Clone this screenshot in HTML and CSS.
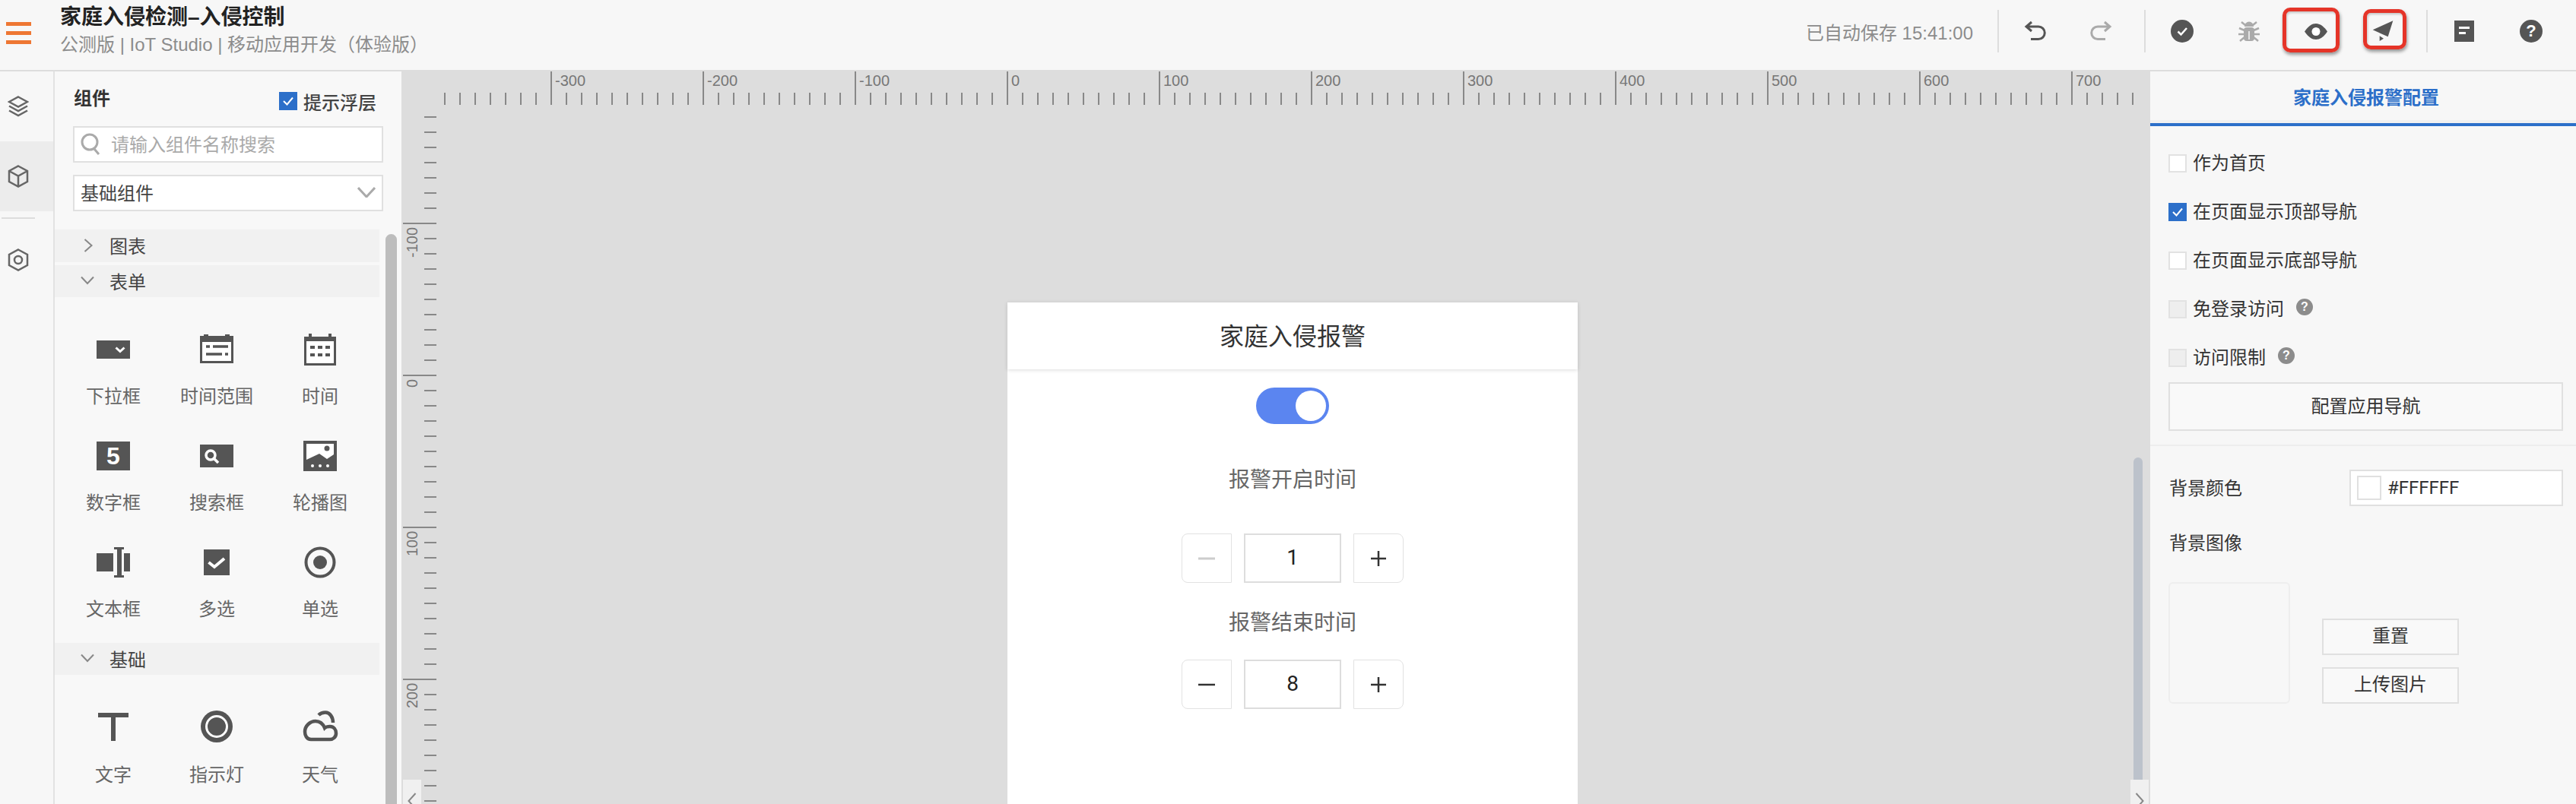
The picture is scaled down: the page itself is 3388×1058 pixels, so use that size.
FILE: index.html
```html
<!DOCTYPE html>
<html lang="zh-CN">
<head>
    <meta charset="UTF-8">
    <title>家庭入侵检测-入侵控制</title>
    <link rel="stylesheet" href="styles.css">
</head>
<body>
<div class="app">
    <header class="topbar">
        <div class="menu-btn"><span></span><span></span><span></span></div>
        <div class="title-block">
            <div class="app-title">家庭入侵检测–入侵控制</div>
            <div class="app-sub">公测版 | IoT Studio | 移动应用开发（体验版）</div>
        </div>
        <div class="saved">已自动保存 15:41:00</div>
        <i class="vline first"></i>
        <div class="tools tools-edit">
            <div class="tool"><svg width="30" height="28" viewBox="0 0 30 28" class="line-icon"><path d="M10 2 L3 8 L10 14 M3 8 H19 A8 8 0 0 1 19 24.500 H9"/></svg></div>
            <div class="tool"><svg width="30" height="28" viewBox="0 0 30 28" class="line-icon grey"><path d="M20 2 L27 8 L20 14 M27 8 H11 A8 8 0 0 0 11 24.500 H21"/></svg></div>
        </div>
        <i class="vline"></i>
        <div class="tools">
            <div class="tool">
                <svg width="30" height="30" viewBox="0 0 30 30"><circle cx="15" cy="15" r="15" fill="#555"/><path d="M9.500 15.500 L13.500 19.500 L21 11" fill="none" stroke="#fff" stroke-width="2.500"/></svg>
            </div>
            <div class="tool">
                <svg width="28" height="28" viewBox="0 0 28 28" fill="#aaa"><path d="M8 8 A6 6.500 0 0 1 20 8 Z"/><rect x="7" y="9" width="14" height="18" rx="4"/><path d="M4 2 L9 6 M24 2 L19 6 M1 10 L8 13 M27 10 L20 13 M0 18 H8 M28 18 H20 M2 27 L8 22 M26 27 L20 22" stroke="#aaa" stroke-width="2.500"/><path d="M14 14 V25" stroke="#f7f7f7" stroke-width="1.500"/></svg>
            </div>
            <div class="tool mark mark-eye">
                <svg width="30" height="21" viewBox="0 0 30 21"><path d="M0 10.500 C5 3 10 0 15 0 C20 0 25 3 30 10.500 C25 18 20 21 15 21 C10 21 5 18 0 10.500 Z" fill="#555"/><circle cx="15" cy="10.500" r="5.500" fill="#fff"/></svg>
            </div>
            <div class="tool mark mark-plane">
                <svg width="28" height="28" viewBox="0 0 28 28" fill="#555"><path d="M27.300 0.300 L0.700 12.300 L9 16 L11 17 L20.700 21.300 Z"/><path d="M9.700 20.300 L9.700 27 L15 23.700 Z"/></svg>
            </div>
        </div>
        <i class="vline"></i>
        <div class="tools">
            <div class="tool">
                <svg width="26" height="28" viewBox="0 0 26 28"><rect width="26" height="28" fill="#555"/><rect x="6" y="8" width="14" height="3" fill="#fff"/><rect x="6" y="15" width="9" height="3" fill="#fff"/></svg>
            </div>
            <div class="tool"><span class="help big">?</span></div>
        </div>
    </header>

    <main class="main">
        <nav class="rail">
            <div class="rail-cell">
                <svg width="28" height="28" viewBox="0 0 28 28" class="line-icon rail-icon"><path d="M14 1.500 L26 8 L14 14.500 L2 8 Z M2 13.500 L14 20 L26 13.500 M2 19.500 L14 26 L26 19.500"/></svg>
            </div>
            <div class="rail-cell active">
                <svg width="28" height="30" viewBox="0 0 28 30" class="line-icon rail-icon"><path d="M14 1.500 L26 8 V22 L14 28.500 L2 22 V8 Z M2 8 L14 14.500 L26 8 M14 14.500 V28.500"/></svg>
            </div>
            <div class="rail-line"></div>
            <div class="rail-cell">
                <svg width="28" height="30" viewBox="0 0 28 30" class="line-icon rail-icon"><path d="M14 1.500 L26 8 V22 L14 28.500 L2 22 V8 Z"/><circle cx="14" cy="15" r="5"/></svg>
            </div>
        </nav>

        <aside class="palette">
            <div class="palette-head">
                <span class="palette-title">组件</span>
                <label class="hint"><span class="check on"><svg width="16" height="14" viewBox="0 0 16 14"><path d="M2 7 L6.500 11.500 L14 2.500"/></svg></span>提示浮层</label>
            </div>
            <div class="field search">
                <svg width="26" height="30" viewBox="0 0 26 30" class="line-icon grey"><circle cx="12" cy="13" r="10"/><path d="M18 22 L24 29"/></svg>
                <span>请输入组件名称搜索</span>
            </div>
            <div class="field select">
                <span>基础组件</span>
                <svg width="24" height="14" viewBox="0 0 24 14" class="line-icon grey"><path d="M1 1 L12 13 L23 1"/></svg>
            </div>

            <div class="group-row closed">
                <svg width="12" height="18" viewBox="0 0 12 18" class="chev"><path d="M1.500 1 L10.500 9 L1.500 17"/></svg>
                <span>图表</span>
            </div>
            <div class="group-row">
                <svg width="18" height="12" viewBox="0 0 18 12" class="chev"><path d="M1 1.500 L9 10 L17 1.500"/></svg>
                <span>表单</span>
            </div>
            <div class="comp-grid">
                <div class="comp">
                    <svg width="48" height="48" viewBox="0 0 48 48"><rect x="2" y="12" width="44" height="24" fill="#555"/><path d="M27.500 21.500 L33 26.500 L38.500 21.500" fill="none" stroke="#fff" stroke-width="3"/></svg>
                    <span>下拉框</span>
                </div>
                <div class="comp">
                    <svg width="48" height="48" viewBox="0 0 48 48"><path d="M7 4 H13 V6 H35 V4 H41 V6 H46 V42 H2 V6 H7 Z" fill="#555"/><rect x="5" y="14" width="38" height="25" fill="#fff"/><path d="M10 20 H15 M19 20 H39 M10 30 H31 M35 30 H39" stroke="#555" stroke-width="3.500"/></svg>
                    <span>时间范围</span>
                </div>
                <div class="comp">
                    <svg width="48" height="48" viewBox="0 0 48 48"><path d="M9 3 H13 V7 H35 V3 H39 V7 H45 V45 H3 V7 H9 Z" fill="#555"/><rect x="6" y="13" width="36" height="29" fill="#fff"/><path d="M11 21 H17 M21 21 H27 M31 21 H37 M11 31 H17 M21 31 H27 M31 31 H37" stroke="#555" stroke-width="4"/></svg>
                    <span>时间</span>
                </div>
                <div class="comp">
                    <svg width="48" height="48" viewBox="0 0 48 48"><rect x="2" y="5" width="44" height="38" fill="#555"/><text x="24" y="35" class="num-glyph">5</text></svg>
                    <span>数字框</span>
                </div>
                <div class="comp">
                    <svg width="48" height="48" viewBox="0 0 48 48"><rect x="2" y="9" width="44" height="30" fill="#555"/><circle cx="16" cy="23" r="6" fill="none" stroke="#fff" stroke-width="3.500"/><path d="M20 27 L26 33" stroke="#fff" stroke-width="3.500"/></svg>
                    <span>搜索框</span>
                </div>
                <div class="comp">
                    <svg width="48" height="48" viewBox="0 0 48 48"><rect x="2" y="4" width="44" height="40" fill="#555"/><path d="M6 8 H42 V22 L33 28 L23 21 L6 29 Z" fill="#fff"/><circle cx="33" cy="14" r="3.500" fill="#555"/><circle cx="14" cy="37" r="2" fill="#fff"/><circle cx="24" cy="37" r="2" fill="#fff"/><circle cx="34" cy="37" r="2" fill="#fff"/></svg>
                    <span>轮播图</span>
                </div>
                <div class="comp">
                    <svg width="48" height="48" viewBox="0 0 48 48" fill="#555"><rect x="2" y="12" width="22" height="24"/><rect x="38" y="12" width="8" height="24"/><path d="M25 4 H38 V7 H35 V41 H38 V44 H25 V41 H29 V7 H25 Z"/></svg>
                    <span>文本框</span>
                </div>
                <div class="comp">
                    <svg width="48" height="48" viewBox="0 0 48 48"><rect x="7" y="7" width="34" height="34" fill="#555"/><path d="M13.500 24 L21 30 L34 19" fill="none" stroke="#fff" stroke-width="4"/></svg>
                    <span>多选</span>
                </div>
                <div class="comp">
                    <svg width="48" height="48" viewBox="0 0 48 48"><circle cx="24" cy="24" r="18.500" fill="none" stroke="#555" stroke-width="4"/><circle cx="24" cy="24" r="9" fill="#555"/></svg>
                    <span>单选</span>
                </div>
            </div>
            <div class="group-row">
                <svg width="18" height="12" viewBox="0 0 18 12" class="chev"><path d="M1 1.500 L9 10 L17 1.500"/></svg>
                <span>基础</span>
            </div>
            <div class="comp-grid basic">
                <div class="comp">
                    <svg width="48" height="48" viewBox="0 0 48 48" fill="#555"><path d="M4 6 H44 V12 H27 V43 H21 V12 H4 Z"/></svg>
                    <span>文字</span>
                </div>
                <div class="comp">
                    <svg width="48" height="48" viewBox="0 0 48 48"><circle cx="24" cy="24" r="21" fill="#555"/><circle cx="24" cy="24" r="13.500" fill="none" stroke="#fff" stroke-width="3"/></svg>
                    <span>指示灯</span>
                </div>
                <div class="comp">
                    <svg width="48" height="48" viewBox="0 0 48 48" class="line-icon cloud"><path d="M12 41 C6 41 4 35 4 31 C4 23 11 17 18 17 C24 17 28 21 30 26 C32 24 35 24 37 24 C42 24 45 28 45 33 C45 38 41 41 37 41 Z M22 9 C25 6 28 5.500 31 5.500 C37 5.500 41 12 41 19"/></svg>
                    <span>天气</span>
                </div>
            </div>
            <div class="palette-thumb"></div>
        </aside>

        <section class="canvas">
            <div class="ruler-h">
                <div class="h-ticks"></div>
                <div class="h-labels">
                    <span>-300</span><span>-200</span><span>-100</span><span>0</span><span>100</span><span>200</span><span>300</span><span>400</span><span>500</span><span>600</span><span>700</span>
                </div>
            </div>
            <div class="ruler-v">
                <div class="v-ticks"></div>
                <div class="v-labels">
                    <span>-100</span><span>0</span><span>100</span><span>200</span>
                </div>
            </div>

            <div class="phone">
                <div class="phone-head">家庭入侵报警</div>
                <div class="phone-body">
                    <div class="toggle"><span></span></div>
                    <div class="phone-label">报警开启时间</div>
                    <div class="stepper">
                        <div class="step left"><svg width="24" height="24" viewBox="0 0 24 24" class="line-icon light"><path d="M1 12 H23"/></svg></div>
                        <div class="step-val">1</div>
                        <div class="step right"><svg width="24" height="24" viewBox="0 0 24 24" class="line-icon dark"><path d="M2 12 H22 M12 2 V22"/></svg></div>
                    </div>
                    <div class="phone-label second">报警结束时间</div>
                    <div class="stepper second">
                        <div class="step left"><svg width="24" height="24" viewBox="0 0 24 24" class="line-icon dark"><path d="M1 12 H23"/></svg></div>
                        <div class="step-val">8</div>
                        <div class="step right"><svg width="24" height="24" viewBox="0 0 24 24" class="line-icon dark"><path d="M2 12 H22 M12 2 V22"/></svg></div>
                    </div>
                </div>
            </div>

            <div class="canvas-thumb"></div>
            <div class="arrow arrow-left"><svg width="12" height="22" viewBox="0 0 12 22" class="chev"><path d="M10.500 1 L1.500 11 L10.500 21"/></svg></div>
            <div class="arrow arrow-right"><svg width="12" height="22" viewBox="0 0 12 22" class="chev"><path d="M1.500 1 L10.500 11 L1.500 21"/></svg></div>
        </section>

        <aside class="props">
            <div class="props-tab">家庭入侵报警配置</div>
            <div class="props-checks">
                <label class="prop-row"><span class="check"></span>作为首页</label>
                <label class="prop-row"><span class="check on"><svg width="16" height="14" viewBox="0 0 16 14"><path d="M2 7 L6.500 11.500 L14 2.500"/></svg></span>在页面显示顶部导航</label>
                <label class="prop-row"><span class="check"></span>在页面显示底部导航</label>
                <label class="prop-row"><span class="check off"></span>免登录访问<span class="help">?</span></label>
                <label class="prop-row"><span class="check off"></span>访问限制<span class="help">?</span></label>
                <div class="btn wide">配置应用导航</div>
            </div>
            <div class="props-style">
                <div class="color-row">
                    <span class="color-label">背景颜色</span>
                    <div class="color-input"><i></i>#FFFFFF</div>
                </div>
                <div class="bg-label">背景图像</div>
                <div class="bg-row">
                    <div class="bg-preview"></div>
                    <div class="bg-actions">
                        <div class="btn">重置</div>
                        <div class="btn">上传图片</div>
                    </div>
                </div>
            </div>
        </aside>
    </main>
</div>
</body>
</html>
```
FILE: styles.css
```css
* {
    box-sizing: border-box;
}
body {
    margin: 0;
    font-family: "Liberation Sans", "Noto Sans CJK SC", sans-serif;
    font-size: 24px;
    color: #333;
    background-color: #f7f7f7;
}
svg {
    display: block;
    flex-shrink: 0;
}
.app {
    display: flex;
    flex-direction: column;
    height: 100vh;
    overflow: hidden;
}
.line-icon {
    fill: none;
    stroke: #555;
    stroke-width: 3;
}
.line-icon.grey {
    stroke: #aaa;
}
.line-icon.dark {
    stroke: #333;
    stroke-width: 2.5;
}
.line-icon.light {
    stroke: #ccc;
    stroke-width: 3;
}
.line-icon.cloud {
    stroke-width: 4.5;
}
.rail-icon {
    stroke: #666;
    stroke-width: 2.5;
}
.chev {
    fill: none;
    stroke: #888;
    stroke-width: 2;
}

/* top bar */
.topbar {
    display: flex;
    align-items: center;
    height: 94px;
    flex-shrink: 0;
    padding: 0 37px 10px 8px;
    background-color: #f7f7f7;
    border-bottom: 2px solid #ddd;
}
.menu-btn {
    display: flex;
    flex-direction: column;
    gap: 7px;
    width: 33px;
    margin: 5px 38px 0 0;
}
.menu-btn span {
    height: 5px;
    background-color: #ee7733;
}
.title-block {
    flex: 1;
}
.app-title {
    font-size: 28px;
    font-weight: 700;
    line-height: 36px;
    color: #222;
}
.app-sub {
    color: #8c8c8c;
    line-height: 36px;
}
.saved {
    color: #8c8c8c;
    margin-right: 32px;
}
.vline {
    width: 2px;
    height: 56px;
    background-color: #ddd;
    margin: 0 26px 0 35px;
}
.vline.first {
    margin-left: 0;
}
.tools {
    display: flex;
    gap: 44px;
}
.tools-edit {
    gap: 42px;
}
.tool {
    position: relative;
    display: flex;
    align-items: center;
    justify-content: center;
    width: 44px;
    height: 44px;
}
.mark::after {
    content: "";
    position: absolute;
    border: 5px solid #e53428;
    border-radius: 10px;
    box-shadow: 1px 3px 4px rgba(0, 0, 0, 0.4), inset 1px 2px 3px rgba(0, 0, 0, 0.2);
}
.mark-eye::after {
    left: -22px;
    right: -9px;
    top: -9px;
    bottom: -6px;
}
.mark-plane::after {
    left: -4px;
    right: -9px;
    top: -7px;
    bottom: -2px;
}
.help {
    display: inline-block;
    width: 22px;
    height: 22px;
    margin-left: 8px;
    border-radius: 50%;
    background-color: #8c8c8c;
    color: #fff;
    font-size: 16px;
    font-weight: 700;
    line-height: 22px;
    text-align: center;
    position: relative;
    top: -1px;
}
.help.big {
    width: 30px;
    height: 30px;
    margin-left: 0;
    background-color: #555;
    font-size: 22px;
    line-height: 30px;
    top: 0;
}

/* main columns */
.main {
    flex: 1;
    display: flex;
    min-height: 0;
}
.rail {
    width: 72px;
    flex-shrink: 0;
    border-right: 2px solid #e2e2e2;
    background-color: #f7f7f7;
}
.rail-cell {
    display: flex;
    align-items: center;
    justify-content: center;
    width: 70px;
    height: 92px;
    padding-right: 22px;
}
.rail-cell.active {
    background-color: #ececec;
}
.rail-line {
    width: 44px;
    height: 2px;
    margin: 8px 0 8px 2px;
    background-color: #ddd;
}

/* component palette */
.palette {
    position: relative;
    width: 456px;
    flex-shrink: 0;
    overflow: hidden;
    background-color: #f8f8f8;
}
.palette-head {
    display: flex;
    justify-content: space-between;
    height: 36px;
    margin: 18px 33px 18px 25px;
}
.palette-title {
    font-weight: 700;
    line-height: 36px;
}
.hint {
    display: flex;
    align-items: center;
    gap: 8px;
    margin-top: 6px;
    font-weight: 500;
    color: #444;
}
.check {
    display: flex;
    align-items: center;
    justify-content: center;
    width: 24px;
    height: 24px;
    flex-shrink: 0;
    border: 2px solid #e2e2e2;
    background-color: #fff;
}
.check.on {
    border-color: #2c6fc9;
    background-color: #2c6fc9;
}
.check.off {
    background-color: #eee;
}
.check svg {
    fill: none;
    stroke: #fff;
    stroke-width: 2;
}
.field {
    display: flex;
    align-items: center;
    width: 408px;
    height: 48px;
    margin-left: 24px;
    padding-bottom: 3px;
    border: 2px solid #e0e0e0;
    background-color: #fff;
}
.search {
    gap: 14px;
    padding-left: 8px;
    color: #aaa;
    margin-bottom: 16px;
}
.select {
    justify-content: space-between;
    padding-left: 8px;
    padding-right: 8px;
    margin-bottom: 24px;
    color: #444;
}
.group-row {
    display: flex;
    align-items: center;
    gap: 20px;
    width: 427px;
    height: 42px;
    padding: 0 0 2px 34px;
    background-color: #f1f1f1;
    color: #444;
}
.group-row.closed {
    height: 43px;
    gap: 22px;
    padding-left: 38px;
    margin-bottom: 4px;
}
.comp-grid {
    display: grid;
    grid-template-columns: repeat(3, 136px);
    row-gap: 38px;
    padding: 45px 0 28px 9px;
}
.comp-grid.basic {
    padding-top: 44px;
}
.comp {
    display: flex;
    flex-direction: column;
    align-items: center;
    gap: 22px;
    color: #666;
    line-height: 32px;
}
.basic .comp {
    gap: 24px;
}
.num-glyph {
    font-family: "Liberation Sans", sans-serif;
    font-size: 32px;
    font-weight: 700;
    fill: #fff;
    text-anchor: middle;
}
.palette-thumb {
    position: absolute;
    left: 435px;
    top: 214px;
    bottom: 0;
    width: 15px;
    border-radius: 8px 8px 0 0;
    background-color: #bdbdbd;
}

/* canvas */
.canvas {
    position: relative;
    flex: 1;
    min-width: 0;
    overflow: hidden;
    background-color: #ddd;
    margin-top: -2px;
}
.ruler-h {
    position: absolute;
    left: 0;
    top: 2px;
    width: 2278px;
    height: 44px;
}
.h-ticks {
    position: absolute;
    left: 56px;
    right: 0;
    top: 0;
    bottom: 0;
    background-image: linear-gradient(to right, #888 2px, transparent 2px), linear-gradient(to right, #888 2px, transparent 2px);
    background-repeat: repeat-x;
    background-size: 20px 16px, 200px 44px;
    background-position: 0 28px, 140px 0;
}
.h-labels {
    display: flex;
    padding-left: 196px;
    font-size: 20px;
    line-height: 24px;
    color: #777;
}
.h-labels span {
    flex: 0 0 200px;
    padding-left: 6px;
}
.ruler-v {
    position: absolute;
    left: 2px;
    top: 2px;
    bottom: 0;
    width: 44px;
}
.v-ticks {
    position: absolute;
    left: 0;
    right: 0;
    top: 59px;
    bottom: 0;
    background-image: linear-gradient(#888 2px, transparent 2px), linear-gradient(#888 2px, transparent 2px);
    background-repeat: repeat-y;
    background-size: 16px 20px, 44px 200px;
    background-position: 28px 0, 0 140px;
}
.v-labels {
    display: flex;
    flex-direction: column;
    padding-top: 199px;
    font-size: 20px;
    color: #777;
}
.v-labels span {
    height: 200px;
    width: 24px;
    padding-bottom: 6px;
    line-height: 24px;
    writing-mode: vertical-rl;
    transform: rotate(180deg);
    text-align: end;
}
.canvas-thumb {
    position: absolute;
    left: 2278px;
    top: 510px;
    width: 12px;
    height: 424px;
    border-radius: 6px 6px 0 0;
    background-color: #bcc2cb;
}
.arrow {
    position: absolute;
    bottom: 0;
    width: 24px;
    height: 32px;
    padding: 17px 0 0 6px;
    background-color: #f0f0f0;
}
.arrow-left {
    left: 2px;
}
.arrow-right {
    right: 2px;
}

/* phone preview */
.phone {
    position: absolute;
    left: 797px;
    top: 306px;
    width: 750px;
    height: 800px;
    background-color: #fff;
}
.phone-head {
    height: 88px;
    font-size: 32px;
    line-height: 90px;
    text-align: center;
    color: #333;
    box-shadow: 0 1px 5px rgba(0, 0, 0, 0.14);
}
.phone-body {
    display: flex;
    flex-direction: column;
    align-items: center;
    padding-top: 24px;
}
.toggle {
    display: flex;
    justify-content: flex-end;
    align-items: center;
    width: 96px;
    height: 48px;
    padding-right: 4px;
    border-radius: 24px;
    background-color: #5b85f0;
}
.toggle span {
    width: 40px;
    height: 40px;
    border-radius: 50%;
    background-color: #fff;
}
.phone-label {
    margin-top: 54px;
    font-size: 28px;
    line-height: 40px;
    color: #666;
}
.phone-label.second {
    margin-top: 33px;
}
.stepper {
    display: flex;
    gap: 16px;
    margin-top: 50px;
}
.stepper.second {
    margin-top: 28px;
}
.step {
    display: flex;
    align-items: center;
    justify-content: center;
    width: 66px;
    height: 65px;
    border: 1px solid #e2e2e2;
}
.step.left {
    border-radius: 8px 0 0 8px;
}
.step.right {
    border-radius: 0 8px 8px 0;
}
.step-val {
    width: 128px;
    height: 65px;
    border: 2px solid #ddd;
    font-family: Roboto, sans-serif;
    font-size: 28px;
    line-height: 60px;
    text-align: center;
    color: #222;
}

/* properties panel */
.props {
    width: 560px;
    flex-shrink: 0;
    background-color: #f7f7f7;
}
.props-tab {
    height: 72px;
    padding: 6px 0 0 8px;
    border-bottom: 4px solid #2c6fc9;
    box-shadow: inset 0 -4px 0 #f0f0f0;
    font-weight: 700;
    line-height: 58px;
    text-align: center;
    color: #2c6fc9;
}
.props-checks {
    padding: 17px 17px 18px 24px;
    border-bottom: 2px solid #eee;
}
.prop-row {
    display: flex;
    align-items: center;
    gap: 8px;
    height: 64px;
    padding-bottom: 5px;
}
.prop-row .check {
    margin-top: 5px;
}
.btn {
    height: 48px;
    border: 2px solid #e0e0e0;
    line-height: 42px;
    text-align: center;
    background-color: #f9f9f9;
}
.btn.wide {
    height: 64px;
    line-height: 60px;
}
.props-style {
    padding: 31px 17px 0 25px;
}
.color-row {
    display: flex;
    align-items: center;
}
.color-label {
    width: 237px;
    margin-bottom: 3px;
}
.color-input {
    display: flex;
    align-items: center;
    gap: 8px;
    flex: 1;
    height: 48px;
    padding-left: 8px;
    border: 2px solid #e0e0e0;
    background-color: #fff;
    font-family: Roboto, sans-serif;
}
.color-input i {
    width: 32px;
    height: 32px;
    border: 2px solid #e0e0e0;
}
.bg-label {
    margin-top: 33px;
    line-height: 32px;
}
.bg-row {
    display: flex;
    margin-top: 35px;
    margin-left: -1px;
}
.bg-preview {
    width: 160px;
    height: 160px;
    border: 2px solid #eee;
    border-radius: 6px;
}
.bg-actions {
    display: flex;
    flex-direction: column;
    justify-content: flex-end;
    gap: 16px;
    width: 180px;
    margin-left: 42px;
}
```
